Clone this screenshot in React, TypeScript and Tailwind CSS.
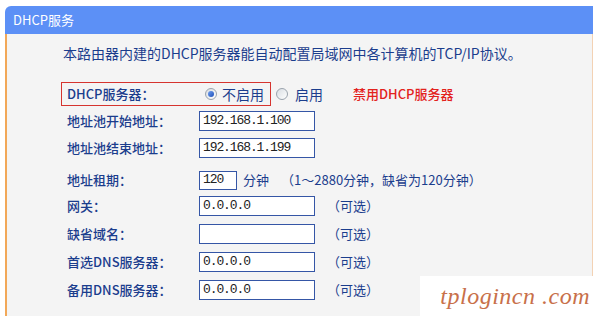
import React from "react";

const cjk = { fontFamily: '"Noto Sans CJK SC", "Liberation Sans", sans-serif' };
const mono = { fontFamily: '"Liberation Mono", "Noto Sans CJK SC", monospace' };

function Radio({ checked }: { checked?: boolean }) {
  return (
    <span className="flex h-[12px] w-[12px] shrink-0 items-center justify-center rounded-full border border-[#9aa3ad] bg-gradient-to-br from-[#d8dde2] to-white">
      {checked && <span className="h-[6px] w-[6px] rounded-full bg-gradient-to-br from-[#6f9ef0] to-[#1f4fb8]" />}
    </span>
  );
}

function Field({ value, w = "w-[116px]", h = "h-[20px]" }: { value: string; w?: string; h?: string }) {
  return (
    <div
      className={`${w} ${h} flex shrink-0 items-center border border-[#3556a6] bg-white pl-[3px] text-[13px] tracking-[-1.1px] text-[#222]`}
      style={mono}
    >
      {value}
    </div>
  );
}

function Row({ label, h, children, extra }: { label: string; h: string; children: React.ReactNode; extra?: string }) {
  return (
    <div className={`flex items-center ${h} ${extra ?? ""} pl-[60px]`}>
      <div className="w-[132px] shrink-0 text-[13px] font-medium text-[#1b3d8d]">{label}</div>
      {children}
    </div>
  );
}

const optional = <span className="ml-[12px] text-[13px] text-[#1b3d8d]">（可选）</span>;

export default function App() {
  return (
    <div className="relative h-[316px] w-[596px] overflow-hidden bg-white pl-[5px] pr-[3px] pt-[6px]" style={cjk}>
      <div className="flex h-[310px] flex-col">
        <div className="flex h-[28px] shrink-0 items-center rounded-tl-[6px] bg-[#5c90f6] pl-[8px] text-[13px] text-white">
          DHCP服务
        </div>
        <div className="flex-1 border-l-2 border-r border-l-[#f2a858] border-r-[#f3d2b4] bg-[#f4f4f4]">
          <div className="pl-[56px] pt-[9px] text-[14px] leading-[20px] text-[#1b3d8d]">
            本路由器内建的DHCP服务器能自动配置局域网中各计算机的TCP/IP协议。
          </div>

          <div className="mt-[19px] flex items-center">
            <div className="ml-[54px] flex h-[24px] w-[210px] items-center border border-[#d6342f] pl-[5px]">
              <div className="w-[132px] shrink-0 text-[13px] font-medium text-[#1b3d8d]">DHCP服务器：</div>
              <div className="ml-[6px]"><Radio checked /></div>
              <span className="ml-[5px] text-[14px] text-[#1b3d8d]">不启用</span>
            </div>
            <div className="ml-[5px]"><Radio /></div>
            <span className="ml-[7px] text-[14px] text-[#1b3d8d]">启用</span>
            <span className="ml-[30px] text-[13px] font-medium text-[#e3221d]">禁用DHCP服务器</span>
          </div>

          <div className="flex flex-col">
            <Row label="地址池开始地址：" h="h-[27px]" extra="mt-[1px]">
              <Field value="192.168.1.100" />
            </Row>
            <Row label="地址池结束地址：" h="h-[28px]">
              <Field value="192.168.1.199" />
            </Row>
            <Row label="地址租期：" h="h-[30px]" extra="pt-[6px]">
              <Field value="120" w="w-[38px]" h="h-[19px]" />
              <span className="ml-[6px] text-[13px] text-[#1b3d8d]">分钟</span>
              <span className="ml-[12px] text-[13px] text-[#1b3d8d]">（1～2880分钟，缺省为120分钟）</span>
            </Row>
            <Row label="网关：" h="h-[28px]">
              <Field value="0.0.0.0" />
              {optional}
            </Row>
            <Row label="缺省域名：" h="h-[28px]">
              <Field value="" />
              {optional}
            </Row>
            <Row label="首选DNS服务器：" h="h-[28px]">
              <Field value="0.0.0.0" />
              {optional}
            </Row>
            <Row label="备用DNS服务器：" h="h-[28px]">
              <Field value="0.0.0.0" />
              {optional}
            </Row>
          </div>
        </div>
      </div>

      {/* watermark */}
      <div className="absolute bottom-0 right-0 flex h-[40px] w-[176px] items-center justify-end bg-white pr-[6px]">
        <span
          className="text-[24px] italic tracking-[0.5px] text-[#c8704a]"
          style={{ fontFamily: '"Liberation Serif", serif' }}
        >
          tplogincn .com
        </span>
      </div>
    </div>
  );
}
